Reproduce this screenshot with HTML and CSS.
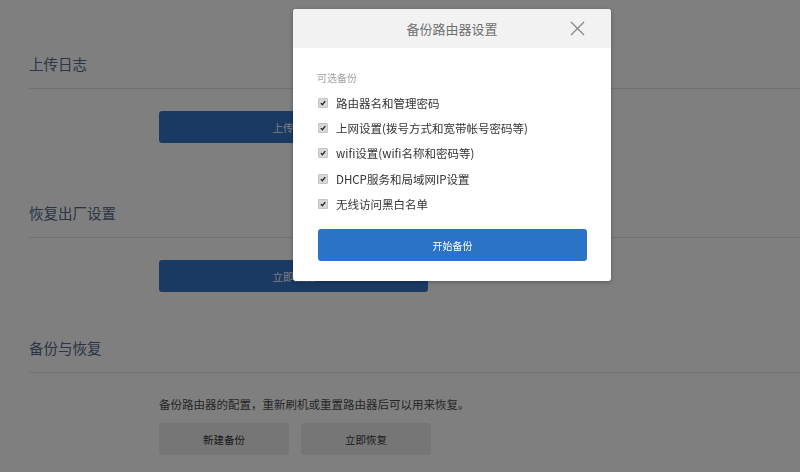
FILE: index.html
```html
<!DOCTYPE html>
<html lang="zh-CN">
<head>
<meta charset="utf-8">
<title>备份路由器设置</title>
<link rel="stylesheet" href="styles.css">
</head>
<body>
<div class="page">
  <section class="sec sec-log">
    <h2 class="sec-title">上传日志</h2>
    <div class="sec-body">
      <button class="btn-primary wide">上传日志</button>
    </div>
  </section>
  <section class="sec sec-reset">
    <h2 class="sec-title">恢复出厂设置</h2>
    <div class="sec-body">
      <button class="btn-primary wide">立即恢复</button>
    </div>
  </section>
  <section class="sec sec-backup">
    <h2 class="sec-title">备份与恢复</h2>
    <div class="sec-body">
      <p class="desc">备份路由器的配置，重新刷机或重置路由器后可以用来恢复。</p>
      <div class="btn-row">
        <button class="btn-gray">新建备份</button>
        <button class="btn-gray">立即恢复</button>
      </div>
    </div>
  </section>
</div>

<div class="overlay"></div>

<div class="modal">
  <div class="modal-head">
    <span class="modal-title">备份路由器设置</span>
    <svg class="close" width="15" height="15" viewBox="0 0 15 15"><path d="M1 1 L14 14 M14 1 L1 14" stroke="#8a8a8a" stroke-width="1.4" fill="none"/></svg>
  </div>
  <div class="modal-body">
    <div class="opt-label">可选备份</div>
    <ul class="opts">
      <li><span class="cb"><svg width="10" height="10" viewBox="0 0 10 10"><path d="M2.3 5.2 L4.2 7.2 L7.8 2.6" stroke="#222" stroke-width="1.6" fill="none"/></svg></span>路由器名和管理密码</li>
      <li><span class="cb"><svg width="10" height="10" viewBox="0 0 10 10"><path d="M2.3 5.2 L4.2 7.2 L7.8 2.6" stroke="#222" stroke-width="1.6" fill="none"/></svg></span>上网设置(拨号方式和宽带帐号密码等)</li>
      <li><span class="cb"><svg width="10" height="10" viewBox="0 0 10 10"><path d="M2.3 5.2 L4.2 7.2 L7.8 2.6" stroke="#222" stroke-width="1.6" fill="none"/></svg></span>wifi设置(wifi名称和密码等)</li>
      <li><span class="cb"><svg width="10" height="10" viewBox="0 0 10 10"><path d="M2.3 5.2 L4.2 7.2 L7.8 2.6" stroke="#222" stroke-width="1.6" fill="none"/></svg></span>DHCP服务和局域网IP设置</li>
      <li><span class="cb"><svg width="10" height="10" viewBox="0 0 10 10"><path d="M2.3 5.2 L4.2 7.2 L7.8 2.6" stroke="#222" stroke-width="1.6" fill="none"/></svg></span>无线访问黑白名单</li>
    </ul>
    <button class="btn-start">开始备份</button>
  </div>
</div>
</body>
</html>
```

FILE: styles.css
```css
* { box-sizing: border-box; }
html, body {
  margin: 0;
  padding: 0;
  background: #ffffff;
  width: 800px;
  height: 472px;
  overflow: hidden;
  font-family: "Noto Sans CJK SC", "Noto Sans", "Liberation Sans", sans-serif;
}
.page {
  padding: 54px 0 0 29px;
}
.sec-title {
  margin: 0;
  font-size: 14.5px;
  font-weight: normal;
  line-height: 20px;
  color: #586a8a;
  padding-bottom: 14px;
  border-bottom: 1px solid #e0e0e0;
}
.sec-body {
  margin-left: 130px;
  padding-top: 22px;
}
.sec-log { padding-bottom: 60px; }
.sec-reset { padding-bottom: 46px; }
.btn-primary {
  display: block;
  height: 32px;
  border: none;
  border-radius: 3px;
  background: #3474c6;
  color: #ffffff;
  font-family: inherit;
  font-size: 10.5px;
}
.btn-primary.wide { width: 269px; }
.desc {
  margin: 0;
  font-size: 11.5px;
  line-height: 18px;
  color: #4a4a4a;
}
.btn-row {
  display: flex;
  gap: 12px;
  margin-top: 10px;
}
.btn-gray {
  width: 130px;
  height: 32px;
  border: none;
  border-radius: 3px;
  background: #ececec;
  color: #333333;
  font-family: inherit;
  font-size: 10.5px;
}
.overlay {
  position: fixed;
  inset: 0;
  background: rgba(0, 0, 0, 0.5);
}
.modal {
  position: absolute;
  left: 293px;
  top: 9px;
  width: 318px;
  background: #ffffff;
  border-radius: 3px;
  overflow: hidden;
  box-shadow: 0 1px 4px rgba(0, 0, 0, 0.3);
}
.modal-head {
  position: relative;
  height: 39px;
  background: #f2f2f2;
  display: flex;
  align-items: center;
  justify-content: center;
}
.modal-title {
  font-size: 13px;
  color: #707070;
}
.close {
  position: absolute;
  right: 26px;
  top: 12px;
}
.modal-body {
  padding: 22px 24px 20px 24px;
}
.opt-label {
  font-size: 10px;
  line-height: 16px;
  color: #a0a0a0;
}
.opts {
  list-style: none;
  margin: 4px 0 0 0;
  padding: 0 0 0 1px;
}
.opts li {
  display: flex;
  align-items: center;
  height: 25.3px;
  font-size: 11.5px;
  color: #333333;
}
.cb {
  width: 10px;
  height: 10px;
  background: #d8d8d8;
  border: 1px solid #c4c4c4;
  border-radius: 1px;
  margin-right: 8px;
  display: flex;
  align-items: center;
  justify-content: center;
}
.cb svg { display: block; }
.btn-start {
  display: block;
  width: 269px;
  height: 32px;
  margin: 13px 0 0 1px;
  border: none;
  border-radius: 3px;
  background: #2b73c4;
  color: #ffffff;
  font-family: inherit;
  font-size: 10px;
}
```
